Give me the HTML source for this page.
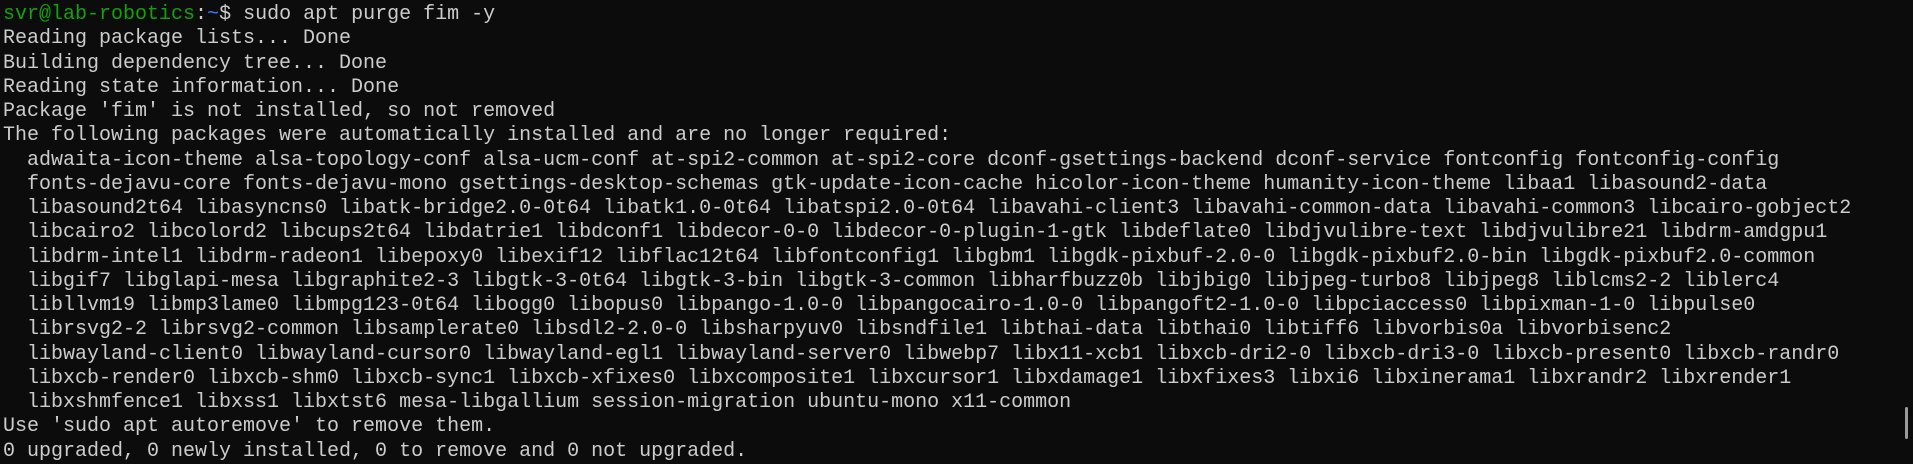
<!DOCTYPE html>
<html><head><meta charset="utf-8"><style>
html,body{margin:0;padding:0;background:#0c0c0c;width:1913px;height:439px;overflow:hidden}
pre{margin:0;position:absolute;left:3px;top:-21.25px;font-family:"Liberation Mono","DejaVu Sans Mono",monospace;font-size:20px;line-height:24.25px;color:#cccccc;white-space:pre}
.g{color:#13a10e}.b{color:#3b78ff}
.sb{position:absolute;left:1905px;top:407px;width:3px;height:32px;background:#9a9a9a;border-radius:2px}
</style></head><body>
<pre><span class="g">                    </span>
<span class="g">svr@lab-robotics</span>:<span class="b">~</span>$ sudo apt purge fim -y
Reading package lists... Done
Building dependency tree... Done
Reading state information... Done
Package 'fim' is not installed, so not removed
The following packages were automatically installed and are no longer required:
  adwaita-icon-theme alsa-topology-conf alsa-ucm-conf at-spi2-common at-spi2-core dconf-gsettings-backend dconf-service fontconfig fontconfig-config
  fonts-dejavu-core fonts-dejavu-mono gsettings-desktop-schemas gtk-update-icon-cache hicolor-icon-theme humanity-icon-theme libaa1 libasound2-data
  libasound2t64 libasyncns0 libatk-bridge2.0-0t64 libatk1.0-0t64 libatspi2.0-0t64 libavahi-client3 libavahi-common-data libavahi-common3 libcairo-gobject2
  libcairo2 libcolord2 libcups2t64 libdatrie1 libdconf1 libdecor-0-0 libdecor-0-plugin-1-gtk libdeflate0 libdjvulibre-text libdjvulibre21 libdrm-amdgpu1
  libdrm-intel1 libdrm-radeon1 libepoxy0 libexif12 libflac12t64 libfontconfig1 libgbm1 libgdk-pixbuf-2.0-0 libgdk-pixbuf2.0-bin libgdk-pixbuf2.0-common
  libgif7 libglapi-mesa libgraphite2-3 libgtk-3-0t64 libgtk-3-bin libgtk-3-common libharfbuzz0b libjbig0 libjpeg-turbo8 libjpeg8 liblcms2-2 liblerc4
  libllvm19 libmp3lame0 libmpg123-0t64 libogg0 libopus0 libpango-1.0-0 libpangocairo-1.0-0 libpangoft2-1.0-0 libpciaccess0 libpixman-1-0 libpulse0
  librsvg2-2 librsvg2-common libsamplerate0 libsdl2-2.0-0 libsharpyuv0 libsndfile1 libthai-data libthai0 libtiff6 libvorbis0a libvorbisenc2
  libwayland-client0 libwayland-cursor0 libwayland-egl1 libwayland-server0 libwebp7 libx11-xcb1 libxcb-dri2-0 libxcb-dri3-0 libxcb-present0 libxcb-randr0
  libxcb-render0 libxcb-shm0 libxcb-sync1 libxcb-xfixes0 libxcomposite1 libxcursor1 libxdamage1 libxfixes3 libxi6 libxinerama1 libxrandr2 libxrender1
  libxshmfence1 libxss1 libxtst6 mesa-libgallium session-migration ubuntu-mono x11-common
Use 'sudo apt autoremove' to remove them.
0 upgraded, 0 newly installed, 0 to remove and 0 not upgraded.</pre>
<div class="sb"></div>
</body></html>
